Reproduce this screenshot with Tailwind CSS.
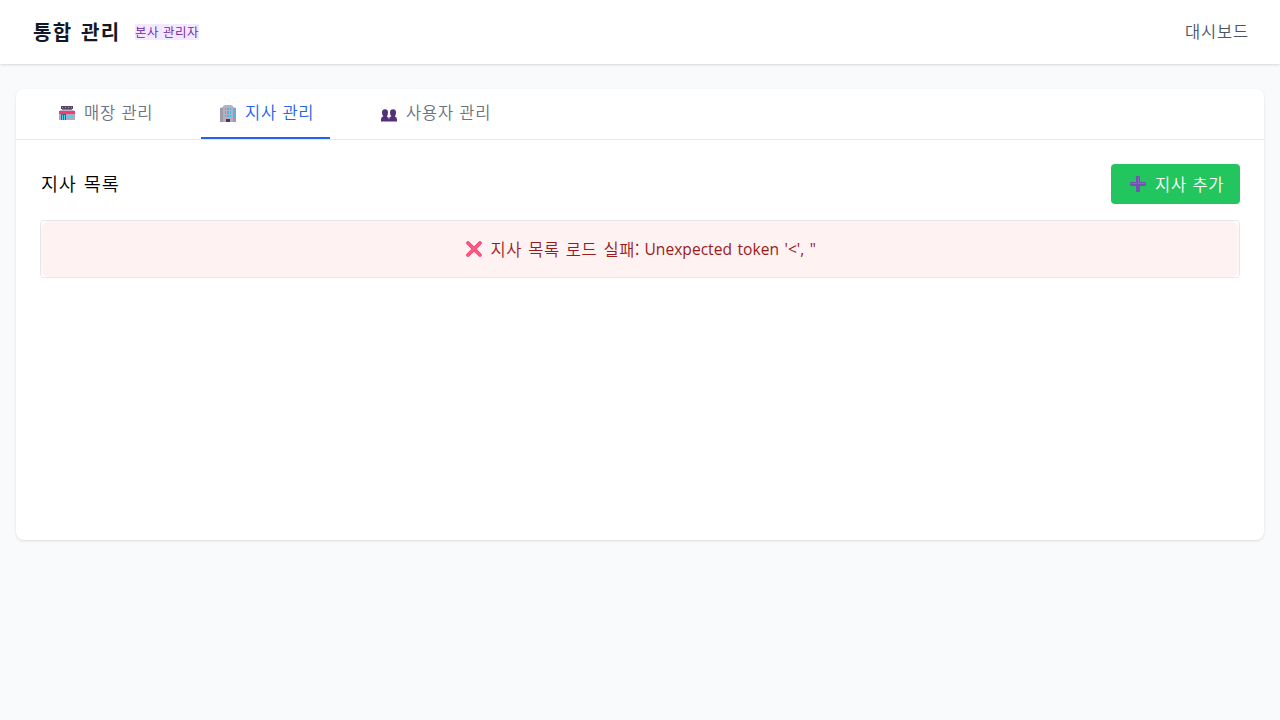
<!DOCTYPE html>
<html lang="ko">
<head>
<meta charset="utf-8">
<title>통합 관리</title>
<script src="https://cdn.jsdelivr.net/npm/@tailwindcss/browser@4"></script>
</head>
<body class="bg-[#f9fafb] min-h-screen overflow-hidden text-black font-['Noto_Sans_CJK_KR',sans-serif] font-[350] tracking-[0.8px] [word-spacing:1.2px] text-[16.5px] leading-6">
<header class="h-16 mb-px bg-white shadow-[0_1px_3px_rgba(0,0,0,0.1),0_1px_2px_-1px_rgba(0,0,0,0.1)] px-8 flex items-center justify-between">
  <div class="flex items-center">
    <h1 class="w-[103px] pl-px text-xl leading-7 tracking-[1.45px] font-bold text-[#111827] whitespace-nowrap">통합 관리</h1>
    <span class="w-16 h-4 bg-[#f3e8ff] text-[#6b21a8] text-[12.5px] leading-4 tracking-[0.4px] [word-spacing:0.4px] whitespace-nowrap">본사 관리자</span>
  </div>
  <a class="text-[#4b5563] w-16 pl-px pb-0.5 whitespace-nowrap">대시보드</a>
</header>
<main class="px-4 pt-6">
  <section class="bg-white rounded-lg shadow-[0_1px_3px_rgba(0,0,0,0.1),0_1px_2px_-1px_rgba(0,0,0,0.1)] h-[451px]">
    <nav class="h-[51px] border-b border-[#e5e7eb] px-6 flex gap-8 text-[#6b7280] whitespace-nowrap">
      <button class="w-[129px] h-[50px] px-4 flex items-center border-b-2 border-transparent">
        <svg class="w-[22px] h-[22px] mr-1.5 shrink-0" viewBox="0 0 22 22">
          <path fill="#c2b7c8" d="M4 8h14v4H4z"/><path fill="#5b4663" d="M5 4h12v3H5z"/><path fill="#a794ae" d="M6 5h1v1H6zm3 0h1v1H9zm3 0h1v1h-1zm3 0h1v1h-1z"/><path fill="#8d7795" d="M6 7h10v1H6z"/>
          <path fill="#f43b6c" d="M3 9h16v3H3z"/><path fill="#b3a8bd" d="M3 12h16v6H3z"/><path fill="#20718c" d="M5 12h5v6H5z"/><path fill="#50d3ef" d="M6 13h1v5H6zm2 0h1v5H8zm4 0h5v2h-5z"/>
        </svg><span class="pb-0.5">매장 관리</span>
      </button>
      <button class="w-[129px] h-[50px] px-4 flex items-center border-b-2 border-[#2563eb] text-[#2563eb]">
        <svg class="w-[22px] h-[22px] mr-1.5 shrink-0" viewBox="0 0 22 22">
          <path fill="#a39aa9" d="M3 6l4-1v15H3zm12-1l4 1v14h-4z"/><path fill="#b9b0be" d="M6 4l2-1h6l2 1v16H6z"/>
          <path fill="#38bdf2" d="M8 6h1v2H8zm2 0h2v2h-2zm3 0h1v2h-1zM8 9h1v3H8zm2 0h2v3h-2zm3 0h1v3h-1zM8 13h1v2H8zm2 0h2v2h-2zm3 0h1v2h-1zM4 8h1v2H4zm0 3h1v2H4zm0 3h1v2H4zm13-6h1v2h-1zm0 3h1v2h-1zm0 3h1v2h-1z"/><path fill="#49384f" d="M9 17h4v3H9z"/>
        </svg><span class="pb-0.5">지사 관리</span>
      </button>
      <button class="w-[146px] h-[50px] px-4 flex items-center border-b-2 border-transparent">
        <svg class="w-[22px] h-[22px] mr-1.5 shrink-0" viewBox="0 1 22 22" fill="#533078">
          <path d="M3 20.5v-2q0-2.6 2.4-3.2Q4 13.9 4 11.5q0-3.2 3-3.2t3 3.2q0 2.4-1.2 4Q11 16.1 11 18.5v2z"/><path d="M11 20.5v-2q0-2.6 2.4-3.2Q12 13.9 12 11.5q0-3.2 3-3.2t3 3.2q0 2.4-1.2 4Q19 16.1 19 18.5v2z"/>
        </svg><span class="pb-0.5">사용자 관리</span>
      </button>
    </nav>
    <div class="p-6">
      <div class="flex items-center justify-between h-10 mb-4">
        <h2 class="text-[18.5px] leading-7 tracking-[0.8px] pb-0.5 pl-px">지사 목록</h2>
        <button class="w-[129px] h-10 rounded bg-[#22c55e] text-white px-4 flex items-center whitespace-nowrap">
          <svg class="w-[22px] h-[22px] mr-1.5 shrink-0" viewBox="0 0 22 22">
            <path fill="#7350b3" d="M10 3h2q1 0 1 1v5h5q1 0 1 1v2q0 1-1 1h-5v5q0 1-1 1h-2q-1 0-1-1v-5H4q-1 0-1-1v-2q0-1 1-1h5V4q0-1 1-1z"/><path fill="#8b67bd" d="M11 4h1v6h6v1h-7zM4 10h6v1H4z"/>
          </svg><span class="pb-px">지사 추가</span>
        </button>
      </div>
      <div class="border border-[#e5e7eb] rounded">
        <div class="h-14 rounded-lg bg-[#fef2f2] text-[#991b1b] flex items-center justify-center whitespace-nowrap">
          <svg class="w-[22px] h-[22px] mr-1.5 shrink-0" viewBox="0 0 22 22" fill="none" stroke-linecap="round"><path stroke="#f43b6c" stroke-width="3.6" d="M5 5l12 12M17 5L5 17"/><path stroke="#ff5a80" stroke-width="2" d="M5 5l12 12M17 5L5 17"/></svg>
          <span class="w-[154px] pb-px tracking-[0.65px] [word-spacing:0.7px]">지사 목록 로드 실패:</span>
          <span class="w-[173px] text-[15.6px] font-['Open_Sans',sans-serif] font-normal tracking-normal [word-spacing:1.5px]">Unexpected token '&lt;', "</span>
        </div>
      </div>
    </div>
  </section>
</main>
</body>
</html>
